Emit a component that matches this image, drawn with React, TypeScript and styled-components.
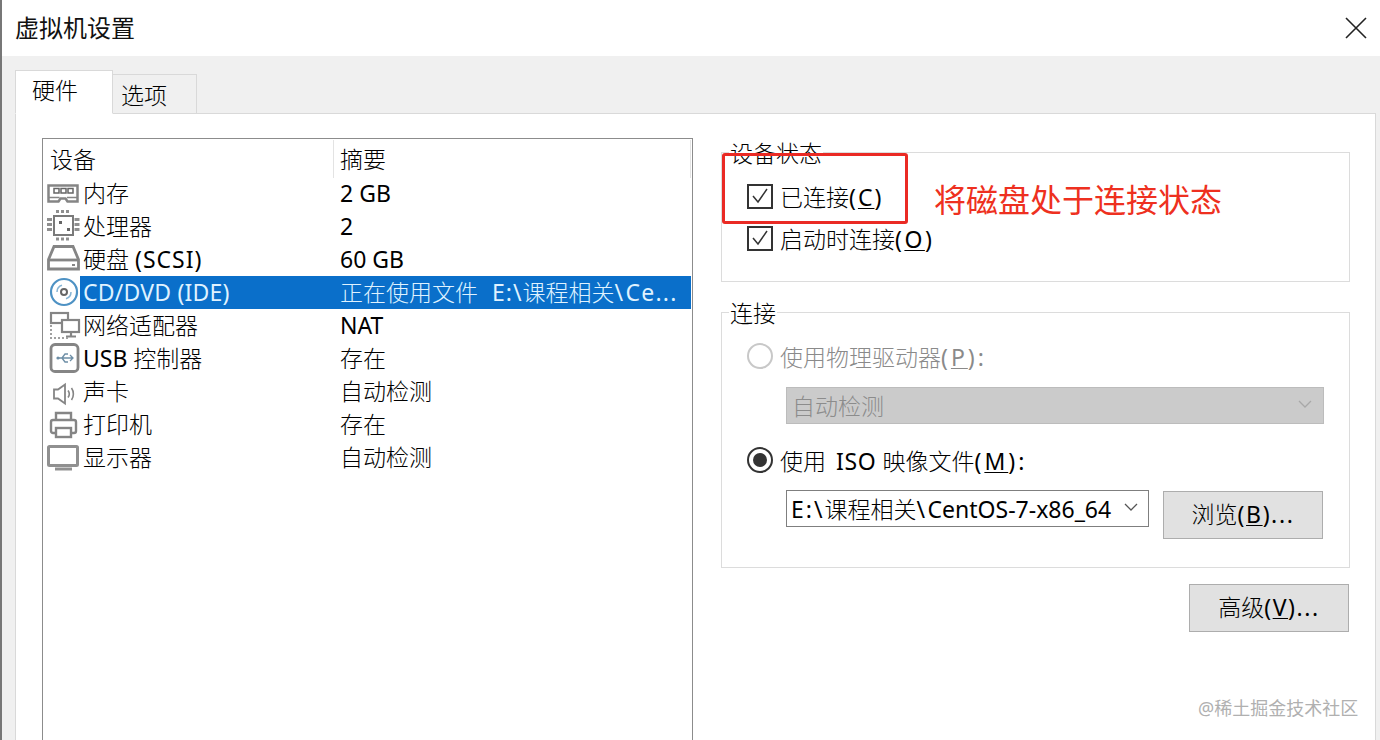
import React from "react";
import styled, { createGlobalStyle } from "styled-components";

const Global = createGlobalStyle`
  html, body { margin: 0; padding: 0; background: #fff; }
  #root { width: 1380px; height: 740px; }
`;
const FONT = `"Noto Sans", "Noto Sans CJK SC", sans-serif`;

const Window = styled.div`
  position: relative; width: 1380px; height: 740px; overflow: hidden; background: #f0f0f0;
  border-left: 2px solid #777; box-sizing: border-box; display: flex; flex-direction: column;
  font-family: ${FONT}; font-weight: 300; color: #000; font-size: 23px;
`;
const TitleBar = styled.header`
  height: 56px; background: #fff; display: flex; align-items: center; justify-content: space-between;
  padding: 0 13px; flex: none;
`;
const Title = styled.h1`margin: 0; font-size: 24px; font-weight: 400; line-height: 56px; color: #111;`;
const Tabs = styled.div`display: flex; align-items: flex-end; height: 57px; padding-left: 13px; flex: none;`;
const Tab = styled.div<{ $active?: boolean }>`
  box-sizing: border-box; height: ${p => (p.$active ? 44 : 39)}px; width: ${p => (p.$active ? 98 : 84)}px;
  background: ${p => (p.$active ? "#fff" : "#f0f0f0")}; border: 1px solid #d9d9d9;
  border-bottom: ${p => (p.$active ? "1px solid #fff" : "none")};
  ${p => !p.$active && "border-left: none;"}
  margin-bottom: ${p => (p.$active ? -1 : 0)}px; position: relative;
  padding-left: ${p => (p.$active ? 16 : 8)}px; line-height: ${p => (p.$active ? 38 : 41)}px;
`;
const Panel = styled.main`
  flex: 1; margin-left: 13px; margin-right: 4px; background: #fff; border: 1px solid #d9d9d9; border-bottom: none;
  padding: 24px 25px 0 26px; display: flex; gap: 28px; min-height: 0;
`;
const List = styled.section`
  width: 651px; box-sizing: border-box; height: 640px; border: 1px solid #8c8c8c; padding: 1px; flex: none;
`;
const Head = styled.div`display: grid; grid-template-columns: 289px 1fr; height: 37px; line-height: 38px;`;
const HeadCell = styled.div<{ $second?: boolean }>`
  padding-left: 6px; border-left: ${p => (p.$second ? "1px solid #e3e3e3" : "none")};
  border-right: ${p => (p.$second ? "1px solid #e3e3e3" : "none")};
`;
const Row = styled.div`display: grid; grid-template-columns: 36px 254px 1fr; height: 33px; line-height: 33px;`;
const IconCell = styled.div`display: flex; align-items: center; padding-left: 3px;`;
const NameCell = styled.div<{ $sel?: boolean }>`
  background: ${p => (p.$sel ? "#0a6fca" : "transparent")}; color: ${p => (p.$sel ? "#dff2ff" : "#000")};
  padding-left: 3px; white-space: nowrap;
`;
const ValueCell = styled.div<{ $sel?: boolean }>`
  background: ${p => (p.$sel ? "#0a6fca" : "transparent")}; color: ${p => (p.$sel ? "#dff2ff" : "#000")};
  padding-left: 6px; white-space: nowrap; overflow: hidden;
`;
const Side = styled.aside`flex: 1; display: flex; flex-direction: column; padding-top: 14px; align-items: stretch;`;
const Group = styled.section<{ $h: number; $gap?: number }>`
  position: relative; box-sizing: border-box; height: ${p => p.$h}px; border: 1px solid #dcdcdc;
  margin-bottom: ${p => p.$gap ?? 0}px; padding: 0 25px;
`;
const Legend = styled.div`
  position: absolute; left: 7px; top: -16px; background: #fff; line-height: 32px; padding: 0 1px;
`;
const CheckRow = styled.label<{ $top: number }>`
  display: flex; align-items: center; gap: 7px; height: 42px; margin-top: ${p => p.$top}px;
`;
const Box = styled.span`
  box-sizing: border-box; width: 26px; height: 25px; border: 2px solid #333; display: flex;
  align-items: center; justify-content: center; flex: none; background: #fff;
`;
const Radio = styled.span<{ $on?: boolean }>`
  box-sizing: border-box; width: 26px; height: 26px; border-radius: 50%; flex: none; position: relative;
  border: 2px solid ${p => (p.$on ? "#333" : "#c8c8c8")}; background: #fff;
  ${p => p.$on && `&::after { content: ""; position: absolute; inset: 4px; border-radius: 50%; background: #333; }`}
`;
const RadioRow = styled.label<{ $dim?: boolean; $top: number }>`
  display: flex; align-items: center; gap: 7px; height: 32px; margin-top: ${p => p.$top}px;
  color: ${p => (p.$dim ? "#8a8a8a" : "#000")};
`;
const DisabledSelect = styled.div`
  box-sizing: border-box; margin: 15px 0 0 39px; width: 538px; height: 37px; background: #cbcbcb; border: 1px solid #bcbcbc;
  color: #8c8c8c; display: flex; align-items: center; justify-content: space-between; padding: 0 11px 2px 5px;
`;
const FileRow = styled.div`display: flex; gap: 14px; align-items: flex-start; margin: 14px 0 0 39px;`;
const Combo = styled.div`
  box-sizing: border-box; width: 363px; height: 37px; border: 1px solid #7f7f7f; padding: 0 10px 2px 4px;
  display: flex; align-items: center; justify-content: space-between; white-space: nowrap; background: #fff;
`;
const Button = styled.button<{ $top?: number }>`
  box-sizing: border-box; width: 160px; height: 48px; flex: none; background: #e1e1e1; border: 1px solid #adadad;
  font: inherit; color: #000; padding: 0 0 4px; margin-top: ${p => p.$top ?? 0}px;
`;
const Foot = styled.div`display: flex; justify-content: flex-end; padding-right: 1px;`;
const Key = styled.span`text-decoration: underline; text-underline-offset: 2px; text-decoration-thickness: 1px;`;
const Latin = styled.span<{ $sp?: number }>`font-weight: 400; letter-spacing: ${p => p.$sp ?? 0}px;`;
const Callout = styled.div`
  position: absolute; left: 720px; top: 153px; width: 186px; height: 71px; box-sizing: border-box;
  border: 3px solid #ea2a24; border-radius: 3px;
`;
const Note = styled.div`
  position: absolute; left: 932px; top: 178px; font-size: 32px; line-height: 44px; font-weight: 400; color: #ee3020; white-space: nowrap;
`;
const Mark = styled.div`
  position: absolute; left: 1196px; top: 696px; font-size: 18px; line-height: 24px; font-weight: 400; color: #b0b0b0; white-space: nowrap;
`;

const s = "#858585";
const Glyph = styled.svg.attrs({ width: 33, height: 33, viewBox: "0 0 33 33", fill: "none" })`
  display: block; overflow: visible; flex: none;
`;
const Memory = () => (
  <Glyph stroke={s} strokeWidth="2.500">
    <path d="M1.500 8.500h29v16h-10l-2-3h-5l-2 3h-10z" /><path d="M1.500 20.500h11M20 20.500h10.500" strokeWidth="1.500" />
    <g strokeWidth="1.500" stroke="#666"><rect x="7" y="11.500" width="5" height="4.500" /><rect x="14" y="11.500" width="5" height="4.500" /><rect x="21" y="11.500" width="5" height="4.500" /></g>
  </Glyph>
);
const Cpu = () => (
  <Glyph stroke="#8f8f8f" strokeWidth="2">
    <rect x="7" y="6" width="19" height="19" stroke="#7a7a7a" />
    <path d="M9 1.500h15M9 29h15" strokeWidth="3" strokeDasharray="3 2" />
    <path d="M2.500 8v15M30 8v15" strokeWidth="5" strokeDasharray="3 2" />
    <rect x="12" y="11" width="3" height="3" fill="#666" stroke="none" /><rect x="20" y="18" width="3" height="3" fill="#666" stroke="none" />
  </Glyph>
);
const Disk = () => (
  <Glyph stroke={s} strokeWidth="2.800">
    <path d="M7 3.500h19l5.500 13V26H1.500v-9.500z" /><path d="M1.500 17h30" /><path d="M25 22h3" strokeWidth="2" />
  </Glyph>
);
const Disc = () => (
  <Glyph stroke="#4e92c4" strokeWidth="2.200">
    <circle cx="17" cy="16" r="13" /><circle cx="17" cy="16" r="3" stroke="#666" strokeWidth="2" />
    <path d="M10 16a7 7 0 0 1 5-6.700M24 16a7 7 0 0 1-5 6.700" strokeWidth="1.500" stroke="#86b4d4" />
  </Glyph>
);
const Net = () => (
  <Glyph stroke={s} strokeWidth="2.200">
    <rect x="4" y="4" width="17" height="10" /><rect x="15" y="11" width="17" height="12" fill="#fff" />
    <path d="M24 23v4M19 27.500h10" />
    <path d="M4 16v13h17" strokeDasharray="2 2" strokeWidth="2" stroke="#a0a0a0" />
  </Glyph>
);
const Usb = () => (
  <Glyph stroke={s} strokeWidth="2.800">
    <rect x="4" y="2.500" width="27" height="27" rx="4" />
    <g strokeWidth="1.300" stroke="#6d8ea6"><path d="M11 16h15M15 16l3-4h3M15 16l3 4h3M23 13l3 3-3 3" /></g>
    <circle cx="11" cy="16" r="1.600" fill="#6d8ea6" stroke="none" />
  </Glyph>
);
const Speaker = () => (
  <Glyph stroke={s} strokeWidth="1.800">
    <path d="M7 14.500h4l7-5v19l-7-5H7z" /><path d="M21 15.500c1.500 2 1.500 5 0 7M24.500 13c2.500 3.500 2.500 8.500 0 12" strokeWidth="1.600" />
  </Glyph>
);
const Printer = () => (
  <Glyph stroke={s} strokeWidth="2.400">
    <path d="M9 12V5h15v7" /><path d="M9 25H6a2 2 0 0 1-2-2V14a2 2 0 0 1 2-2h21a2 2 0 0 1 2 2v9a2 2 0 0 1-2 2h-3" /><rect x="9" y="20" width="15" height="9" />
  </Glyph>
);
const Monitor = () => (
  <Glyph stroke="#909090" strokeWidth="3">
    <rect x="1.500" y="5.500" width="29" height="19" rx="1" /><path d="M8 28h17" />
  </Glyph>
);
const Tick = () => (
  <svg width="18" height="18" viewBox="0 0 18 18" fill="none" stroke="#333" strokeWidth="1.500">
    <path d="M2 9l5 6L16 2" />
  </svg>
);
const Chevron = ({ c }: { c: string }) => (
  <svg width="14" height="9" viewBox="0 0 14 9" fill="none" stroke={c} strokeWidth="1.300"><path d="M1 1l6 6 6-6" /></svg>
);

const rows: { icon: React.ReactNode; id: string; name: React.ReactNode; val: React.ReactNode; sel?: boolean }[] = [
  { icon: <Memory />, id: "mem", name: "内存", val: <Latin>2 GB</Latin> },
  { icon: <Cpu />, id: "cpu", name: "处理器", val: <Latin>2</Latin> },
  { icon: <Disk />, id: "disk", name: <>硬盘 <Latin $sp={1}>(SCSI)</Latin></>, val: <Latin>60 GB</Latin> },
  {
    icon: <Disc />, id: "cd", sel: true,
    name: <Latin $sp={0.2}>CD/DVD (IDE)</Latin>,
    val: <>正在使用文件<Latin $sp={8}> </Latin><Latin $sp={1}>E:\</Latin>课程相关<Latin $sp={2.5}>\</Latin><Latin $sp={1.2}>Ce...</Latin></>,
  },
  { icon: <Net />, id: "net", name: "网络适配器", val: <Latin>NAT</Latin> },
  { icon: <Usb />, id: "usb", name: <><Latin>USB</Latin> 控制器</>, val: "存在" },
  { icon: <Speaker />, id: "snd", name: "声卡", val: "自动检测" },
  { icon: <Printer />, id: "prn", name: "打印机", val: "存在" },
  { icon: <Monitor />, id: "mon", name: "显示器", val: "自动检测" },
];

export default function App() {
  return (
    <Window>
      <Global />
      <TitleBar>
        <Title>虚拟机设置</Title>
        <svg width="22" height="22" viewBox="0 0 22 22" stroke="#222" strokeWidth="1.600"><path d="M1 1l20 20M21 1L1 21" /></svg>
      </TitleBar>
      <Tabs>
        <Tab $active>硬件</Tab>
        <Tab>选项</Tab>
      </Tabs>
      <Panel>
        <List>
          <Head><HeadCell>设备</HeadCell><HeadCell $second>摘要</HeadCell></Head>
          {rows.map(r => (
            <Row key={r.id}>
              <IconCell>{r.icon}</IconCell>
              <NameCell $sel={r.sel}>{r.name}</NameCell>
              <ValueCell $sel={r.sel}>{r.val}</ValueCell>
            </Row>
          ))}
        </List>
        <Side>
          <Group $h={130} $gap={30}>
            <Legend>设备状态</Legend>
            <CheckRow $top={22}><Box><Tick /></Box><span>已连接<Latin $sp={2}>(<Key>C</Key>)</Latin></span></CheckRow>
            <CheckRow $top={0}><Box><Tick /></Box><span>启动时连接<Latin $sp={2.5}>(<Key>O</Key>)</Latin></span></CheckRow>
          </Group>
          <Group $h={256} $gap={16}>
            <Legend>连接</Legend>
            <RadioRow $dim $top={27}><Radio /><span>使用物理驱动器<Latin $sp={3}>(<Key>P</Key>):</Latin></span></RadioRow>
            <DisabledSelect>自动检测<Chevron c="#a8a8a8" /></DisabledSelect>
            <RadioRow $top={20}><Radio $on /><span>使用<Latin $sp={4}> </Latin><Latin $sp={0.7}>ISO</Latin> 映像文件<Latin $sp={3}>(<Key>M</Key>):</Latin></span></RadioRow>
            <FileRow>
              <Combo><span><Latin $sp={2}>E:\</Latin>课程相关<Latin $sp={2.500}>\</Latin><Latin>CentOS-7-x86_64</Latin></span><Chevron c="#555" /></Combo>
              <Button $top={1}>浏览<Latin $sp={1.6}>(<Key>B</Key>)...</Latin></Button>
            </FileRow>
          </Group>
          <Foot><Button>高级<Latin $sp={1.6}>(<Key>V</Key>)...</Latin></Button></Foot>
        </Side>
      </Panel>
      <Callout />
      <Note>将磁盘处于连接状态</Note>
      <Mark>@稀土掘金技术社区</Mark>
    </Window>
  );
}
